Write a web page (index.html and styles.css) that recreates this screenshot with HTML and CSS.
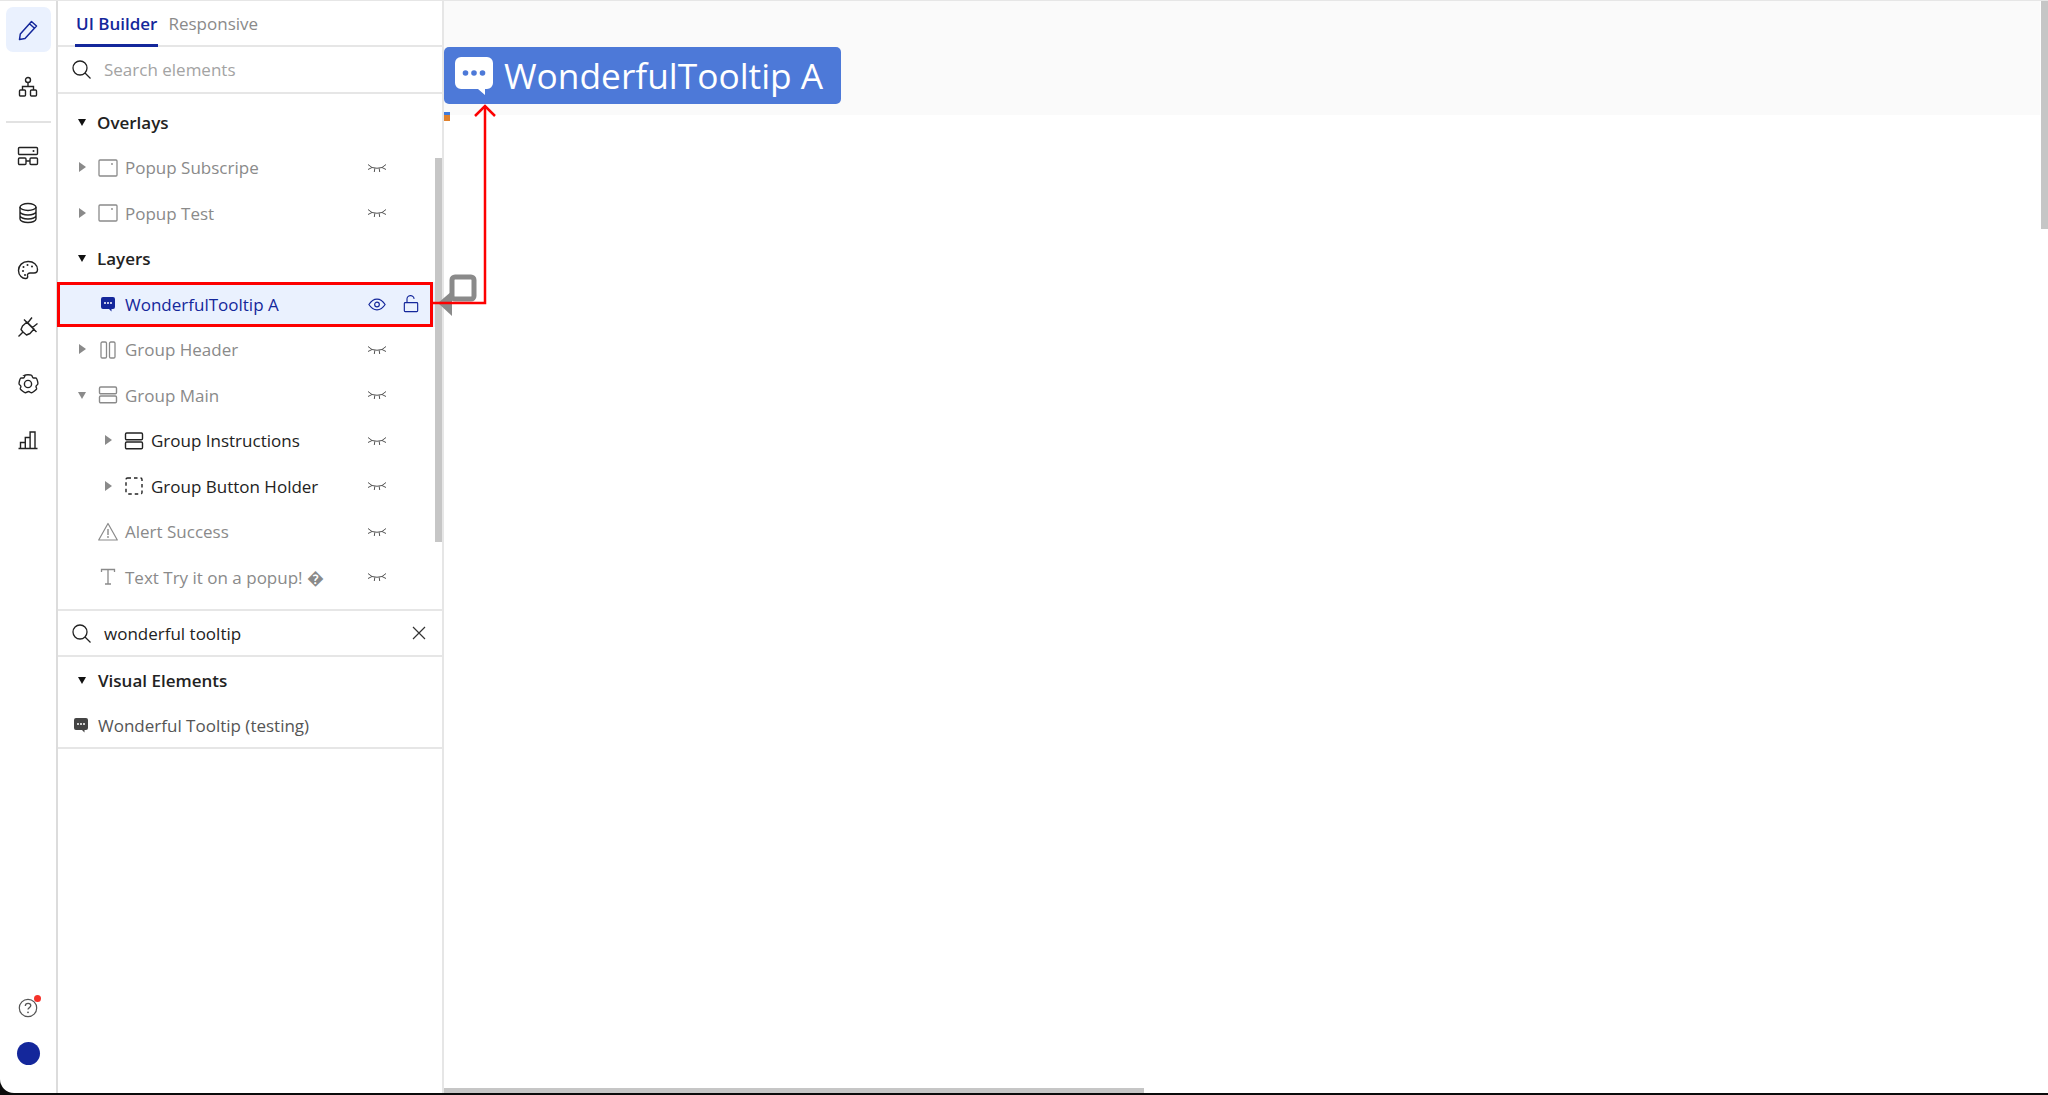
FILE: index.html
```html
<!DOCTYPE html>
<html lang="en">
<head>
<meta charset="utf-8">
<title>UI Builder</title>
<link rel="stylesheet" href="styles.css">
</head>
<body>
<svg class="defs" width="0" height="0" aria-hidden="true">
  <symbol id="closed-eye" viewBox="0 0 20 10"><path d="M1 1.500L5 4.500Q10 6 15 4.500L19 1.500M1 6.500L5 4.500M19 6.500L15 4.500M7.800 5.300L7.300 9M12.200 5.300L12.700 9" fill="none" stroke="currentColor" stroke-width="1"/></symbol>
  <symbol id="popup" viewBox="0 0 20 20"><rect x="1" y="2" width="18" height="16" rx="1" fill="none" stroke="currentColor" stroke-width="1.300"/><circle cx="14" cy="6" r=".9" fill="currentColor"/></symbol>
  <symbol id="rows" viewBox="0 0 20 20"><rect x="1.500" y="2" width="17" height="6.800" rx="1.200" fill="none" stroke="currentColor" stroke-width="1.400"/><rect x="1.500" y="11" width="17" height="6.800" rx="1.200" fill="none" stroke="currentColor" stroke-width="1.400"/></symbol>
  <symbol id="bubble" viewBox="0 0 16 16"><path d="M3 1h10a2 2 0 0 1 2 2v8a2 2 0 0 1-2 2h-1.500v2.400L9 13H3a2 2 0 0 1-2-2V3a2 2 0 0 1 2-2z" fill="currentColor"/><circle cx="5" cy="7" r="1" fill="#fff"/><circle cx="8" cy="7" r="1" fill="#fff"/><circle cx="11" cy="7" r="1" fill="#fff"/></symbol>
  <symbol id="search" viewBox="0 0 19 19"><circle cx="8" cy="8" r="7" fill="none" stroke="currentColor" stroke-width="1.300"/><path d="M13 13l5.500 5.500" stroke="currentColor" stroke-width="1.300"/></symbol>
</svg>
<div class="app">
  <nav class="rail">
    <a class="rail-item active"><svg class="rail-icon" viewBox="0 0 22 22"><path d="M2.500 20.500l.8-5.500L14.500 2.500l5 4.500L8 19.500z M12.500 4.700l5 4.500" fill="none" stroke="currentColor" stroke-width="1.500" stroke-linejoin="round"/></svg></a>
    <a class="rail-item"><svg class="rail-icon" viewBox="0 0 22 22"><circle cx="11" cy="4" r="2.500" fill="none" stroke="currentColor" stroke-width="1.400"/><rect x="2.500" y="14" width="6" height="6" rx="1" fill="none" stroke="currentColor" stroke-width="1.400"/><rect x="13.500" y="14" width="6" height="6" rx="1" fill="none" stroke="currentColor" stroke-width="1.400"/><path d="M11 7v3.500M5.500 14v-3.500h11V14" fill="none" stroke="currentColor" stroke-width="1.400"/></svg></a>
    <div class="rail-rule"></div>
    <a class="rail-item"><svg class="rail-icon" viewBox="0 0 22 22"><rect x="1.500" y="2.500" width="19" height="7" rx="1" fill="none" stroke="currentColor" stroke-width="1.400"/><circle cx="16.500" cy="6" r="1" fill="currentColor"/><rect x="1.500" y="13" width="7.500" height="6.500" rx="1" fill="none" stroke="currentColor" stroke-width="1.400"/><rect x="13" y="13" width="7.500" height="6.500" rx="1" fill="none" stroke="currentColor" stroke-width="1.400"/><path d="M9 16h4" stroke="currentColor" stroke-width="1.400"/></svg></a>
    <a class="rail-item"><svg class="rail-icon" viewBox="0 0 22 22"><ellipse cx="11" cy="5" rx="8" ry="3.500" fill="none" stroke="currentColor" stroke-width="1.400"/><path d="M3 5v12c0 2 3.600 3.500 8 3.500s8-1.500 8-3.500V5M3 9.500c0 2 3.600 3.500 8 3.500s8-1.500 8-3.500M3 13.500c0 2 3.600 3.500 8 3.500s8-1.500 8-3.500" fill="none" stroke="currentColor" stroke-width="1.400"/></svg></a>
    <a class="rail-item"><svg class="rail-icon" viewBox="0 0 22 22"><path d="M11 2.500C5.500 2.500 1.500 6.500 1.500 11.500c0 5 4 8.500 7.500 8 2-.3 1.800-2 1.500-3-.4-1.500 1-2.500 2.500-2.500h4c2.300 0 3.500-1.500 3.500-3.500 0-4.500-4-8-9-8z" fill="none" stroke="currentColor" stroke-width="1.400"/><circle cx="6" cy="12" r="1" fill="currentColor"/><circle cx="6.500" cy="8" r="1" fill="currentColor"/><circle cx="10.500" cy="6" r="1" fill="currentColor"/><circle cx="15" cy="7.500" r="1" fill="currentColor"/><circle cx="8" cy="16" r="1" fill="currentColor"/></svg></a>
    <a class="rail-item"><svg class="rail-icon" viewBox="0 0 22 22"><path d="M1.500 20.500L6 16M6 16l-2-2.500 1.500-3.500L10 6l7 7-4 4.500-3.500 1.500zM11 6.500L15 1.500M15.500 11.500L20.500 7.500M7 3.500L19.500 16" fill="none" stroke="currentColor" stroke-width="1.400" stroke-linejoin="round"/></svg></a>
    <a class="rail-item"><svg class="rail-icon" viewBox="0 0 22 22"><path d="M7.500 2.200c1-.7 6-.7 7 0 .8.600.7 2 1.600 2.600.9.500 2.300-.2 3.200.4.800.7 2 5 1.500 6-.2.800-1.800 1.100-1.800 2.300 0 1.200 1 1.700.5 2.600-.6.900-4 3.700-5 3.700-1 .1-1.700-1.300-2.900-1.300s-2.200 1.400-3.200 1.300c-1-.1-4.400-2.800-5-3.700-.5-.9.500-1.400.5-2.600 0-1.200-1.600-1.500-1.800-2.300-.4-1 .7-5.300 1.500-6 .9-.6 2.300.1 3.200-.4.900-.6.800-2 1.700-2.600z" fill="none" stroke="currentColor" stroke-width="1.400"/><circle cx="11" cy="11" r="3.600" fill="none" stroke="currentColor" stroke-width="1.400"/></svg></a>
    <a class="rail-item"><svg class="rail-icon" viewBox="0 0 22 22"><path d="M1.500 18.500h19M3.500 18.500v-6h4.800v6M8.300 18.500V7.500h4.800v11M13.100 18.500V2h4.900v16.500" fill="none" stroke="currentColor" stroke-width="1.400"/></svg></a>
    <div class="rail-foot">
      <a class="rail-help"><svg class="help-icon" viewBox="0 0 20 20"><circle cx="10" cy="10" r="8.700" fill="none" stroke="currentColor" stroke-width="1.200"/><path d="M7.300 8c0-1.700 1.200-2.700 2.800-2.700 1.500 0 2.700 1 2.700 2.300 0 2-2.800 2-2.800 4" fill="none" stroke="currentColor" stroke-width="1.300"/><circle cx="10" cy="14.300" r=".9" fill="currentColor"/></svg><span class="help-dot"></span></a>
      <span class="avatar"></span>
    </div>
  </nav>

  <aside class="panel">
    <div class="tabs">
      <span class="tab current">UI Builder</span>
      <span class="tab">Responsive</span>
    </div>
    <div class="searchbar"><svg class="search-icon"><use href="#search"/></svg><span class="placeholder">Search elements</span></div>
    <div class="tree">
      <div class="section"><i class="caret down dark"></i>Overlays</div>
      <div class="row hidden"><i class="caret right"></i><svg class="type-icon"><use href="#popup"/></svg><span class="label">Popup Subscripe</span><svg class="eye"><use href="#closed-eye"/></svg></div>
      <div class="row hidden"><i class="caret right"></i><svg class="type-icon"><use href="#popup"/></svg><span class="label">Popup Test</span><svg class="eye"><use href="#closed-eye"/></svg></div>
      <div class="section"><i class="caret down dark"></i>Layers</div>
      <div class="row selected"><i class="caret"></i><svg class="type-icon small"><use href="#bubble"/></svg><span class="label">WonderfulTooltip A</span>
        <svg class="open-eye" viewBox="0 0 20 14"><path d="M1 7c2.500-4 5.500-6 9-6s6.500 2 9 6c-2.500 4-5.500 6-9 6s-6.500-2-9-6z" fill="none" stroke="currentColor" stroke-width="1.300"/><circle cx="10" cy="7" r="2.600" fill="none" stroke="currentColor" stroke-width="1.300"/></svg>
        <svg class="lock" viewBox="0 0 18 20"><rect x="1.500" y="8.500" width="15" height="10" rx="1" fill="none" stroke="currentColor" stroke-width="1.300"/><path d="M4.500 8.500V5a4 4 0 0 1 8-.8" fill="none" stroke="currentColor" stroke-width="1.300"/></svg>
      </div>
      <div class="row hidden"><i class="caret right"></i><svg class="type-icon" viewBox="0 0 20 20"><rect x="3" y="2" width="5.500" height="16" rx="1.300" fill="none" stroke="currentColor" stroke-width="1.300"/><rect x="11.500" y="2" width="5.500" height="16" rx="1.300" fill="none" stroke="currentColor" stroke-width="1.300"/></svg><span class="label">Group Header</span><svg class="eye"><use href="#closed-eye"/></svg></div>
      <div class="row hidden"><i class="caret down"></i><svg class="type-icon"><use href="#rows"/></svg><span class="label">Group Main</span><svg class="eye"><use href="#closed-eye"/></svg></div>
      <div class="row nested"><i class="caret right"></i><svg class="type-icon"><use href="#rows"/></svg><span class="label">Group Instructions</span><svg class="eye"><use href="#closed-eye"/></svg></div>
      <div class="row nested"><i class="caret right"></i><svg class="type-icon" viewBox="0 0 20 20"><rect x="2" y="2" width="16" height="16" rx="1.500" fill="none" stroke="currentColor" stroke-width="1.400" stroke-dasharray="3.500 3"/></svg><span class="label">Group Button Holder</span><svg class="eye"><use href="#closed-eye"/></svg></div>
      <div class="row hidden"><i class="caret"></i><svg class="type-icon" viewBox="0 0 20 20"><path d="M10 1.500L19.300 18H.7z" fill="none" stroke="currentColor" stroke-width="1.200" stroke-linejoin="round"/><path d="M10 7v6" stroke="currentColor" stroke-width="1.400"/><circle cx="10" cy="15" r=".9" fill="currentColor"/></svg><span class="label">Alert Success</span><svg class="eye"><use href="#closed-eye"/></svg></div>
      <div class="row hidden"><i class="caret"></i><svg class="type-icon" viewBox="0 0 20 20"><path d="M3.500 5V2.500h13V5M10 2.500v14.500M7 17h6" fill="none" stroke="currentColor" stroke-width="1.300"/></svg><span class="label">Text Try it on a popup! �</span><svg class="eye"><use href="#closed-eye"/></svg></div>
    </div>
    <div class="searchbar boxed"><svg class="search-icon"><use href="#search"/></svg><span class="query">wonderful tooltip</span><svg class="clear" viewBox="0 0 14 14"><path d="M1 1l12 12M13 1L1 13" stroke="currentColor" stroke-width="1.200"/></svg></div>
    <div class="results">
      <div class="section result-head"><i class="caret down dark"></i>Visual Elements</div>
      <div class="result"><svg class="result-icon"><use href="#bubble"/></svg>Wonderful Tooltip (testing)</div>
    </div>
    <div class="panel-scroll"></div>
  </aside>

  <main class="canvas">
    <div class="canvas-head">
      <div class="badge"><svg class="badge-icon" viewBox="0 0 38 38"><path d="M6 0h26a6 6 0 0 1 6 6v20a6 6 0 0 1-6 6h-2v6l-7-6H6a6 6 0 0 1-6-6V6a6 6 0 0 1 6-6z" fill="#fff"/><circle cx="10.500" cy="16" r="2.800" fill="#4d79d8"/><circle cx="19" cy="16" r="2.800" fill="#4d79d8"/><circle cx="27.500" cy="16" r="2.800" fill="#4d79d8"/></svg><span class="badge-text">WonderfulTooltip A</span></div>
      <div class="chip"></div>
    </div>
    <div class="scroll-v"></div>
    <div class="scroll-h"></div>
  </main>
</div>

<div class="callout-box"></div>
<svg class="annotation" width="120" height="240" viewBox="0 0 120 240">
  <path d="M10 207L24 195V220z" fill="#8a8a8a"/>
  <rect x="24" y="181" width="22" height="22" rx="3" fill="#fff" stroke="#8a8a8a" stroke-width="5"/>
  <path d="M4 207H57V10" fill="none" stroke="#fd0000" stroke-width="2.500"/>
  <path d="M47 20L57 10L67 20" fill="none" stroke="#fd0000" stroke-width="2.500"/>
</svg>
</body>
</html>
```

FILE: styles.css
```css
* { box-sizing: border-box; }
html, body { margin: 0; height: 100%; overflow: hidden; background: #0b0b0b; }
body { font-family: "Open Sans", "Noto Sans", sans-serif; font-size: 17px; color: #1f1f1f; position: relative; }
.defs { position: absolute; }
.app { display: flex; height: 1093px; background: #fff; border-top: 1px solid #e6e6e6; border-bottom-left-radius: 14px; overflow: hidden; }

.rail { width: 58px; flex: none; display: flex; flex-direction: column; align-items: center; padding-top: 6px; border-right: 2px solid #dcdcdc; color: #222; }
.rail-item { width: 45px; height: 45px; margin-bottom: 12px; display: flex; align-items: center; justify-content: center; border-radius: 7px; flex: none; }
.rail-item.active { background: #eaf1fe; color: #14279b; }
.rail-rule { width: 45px; height: 2px; background: #e2e2e2; margin: 0 0 10.500px; flex: none; }
.rail-icon { width: 22px; height: 22px; }
.rail-foot { margin-top: auto; display: flex; flex-direction: column; align-items: center; gap: 24px; padding-bottom: 28px; }
.rail-help { display: block; position: relative; width: 20px; height: 20px; color: #555; }
.help-icon { display: block; width: 20px; height: 20px; }
.help-dot { position: absolute; top: -3px; right: -3px; width: 7px; height: 7px; border-radius: 50%; background: #f5322a; }
.avatar { width: 23px; height: 23px; border-radius: 50%; background: #14279b; }

.panel { width: 386px; flex: none; display: flex; flex-direction: column; position: relative; border-right: 2px solid #e6e6e6; }
.tabs { height: 46px; display: flex; gap: 9px; padding-left: 17px; border-bottom: 2px solid #e6e6e6; flex: none; }
.tab { height: 46px; line-height: 46px; color: #8a8a8a; padding: 0 1px; }
.tab.current { color: #14279b; font-weight: 600; border-bottom: 3px solid #14279b; }
.searchbar { height: 47px; flex: none; display: flex; align-items: center; padding-left: 14px; border-bottom: 2px solid #e6e6e6; }
.searchbar.boxed { border-top: 2px solid #e6e6e6; height: 48px; }
.search-icon { width: 19px; height: 19px; color: #222; margin-right: 13px; }
.placeholder { color: #a3a3a3; }
.query { color: #222; }
.clear { width: 14px; height: 14px; margin-left: auto; margin-right: 16px; color: #333; }

.tree { height: 515px; flex: none; padding-top: 5.500px; }
.section { height: 45.500px; display: flex; align-items: center; font-weight: 600; color: #222; padding-left: 19px; }
.row { height: 45.500px; display: flex; align-items: center; padding-left: 19px; color: #222; }
.row.hidden { color: #8a8a8a; }
.row.selected { color: #14279b; background: #eaf1fe; }
.row.nested { padding-left: 45px; }
.caret { flex: none; margin-right: 8px; display: block; width: 11px; height: 11px; position: relative; }
.caret::before { content: ""; position: absolute; border-style: solid; border-color: transparent; }
.caret.down::before { left: 1px; top: 2px; border-width: 7px 4.500px 0; border-top-color: #8a8a8a; }
.caret.down.dark::before { border-top-color: #111; }
.caret.right::before { left: 2px; top: 0; border-width: 5px 0 5px 7px; border-left-color: #8a8a8a; }
.section .caret { margin-right: 9px; }
.type-icon { width: 20px; height: 20px; flex: none; margin: 0 7px 0 2px; }
.type-icon.small { width: 16px; height: 16px; margin: 0 9px 0 4px; }
.label { flex: 1; white-space: nowrap; }
.eye { width: 20px; height: 10px; flex: none; margin-right: 55px; color: #555; }
.open-eye { width: 18px; height: 13px; flex: none; margin-right: 17px; }
.lock { width: 16px; height: 18px; flex: none; margin-right: 23px; margin-top: -1px; }

.results { border-bottom: 2px solid #e6e6e6; height: 92px; }
.section.result-head { height: 46px; }
.result-head .caret { margin-right: 10px; }
.result { display: flex; align-items: center; height: 44px; color: #555; padding-left: 15px; }
.result-icon { width: 16px; height: 16px; margin-right: 9px; color: #444; }
.panel-scroll { position: absolute; right: 0; top: 157px; width: 7px; height: 384px; background: #c6c6c6; }

.canvas { flex: 1; position: relative; overflow: hidden; }
.canvas-head { height: 114px; background: #fafafa; margin-right: 8px; padding-top: 46px; position: relative; }
.badge { height: 57px; width: 397px; display: flex; align-items: center; gap: 11px; padding-left: 11px; background: #4d79d8; border-radius: 5px; color: #fff; }
.badge-icon { width: 38px; height: 38px; flex: none; margin-top: 1px; }
.badge-text { font-size: 35.300px; font-weight: 500; white-space: nowrap; margin-top: -2px; }
.chip { position: absolute; left: 0; top: 111px; width: 6px; height: 9px; background: linear-gradient(#3f7bdc 35%, #e0812d 35%); }
.scroll-v { position: absolute; top: 0; right: 0; width: 7px; height: 228px; background: #c6c6c6; }
.scroll-h { position: absolute; left: 0; bottom: 0; width: 700px; height: 5px; background: #c6c6c6; }

.callout-box { position: absolute; left: 57px; top: 282px; width: 376px; height: 45px; border: 3px solid #fd0000; }
.annotation { position: absolute; left: 428px; top: 96px; }
```
